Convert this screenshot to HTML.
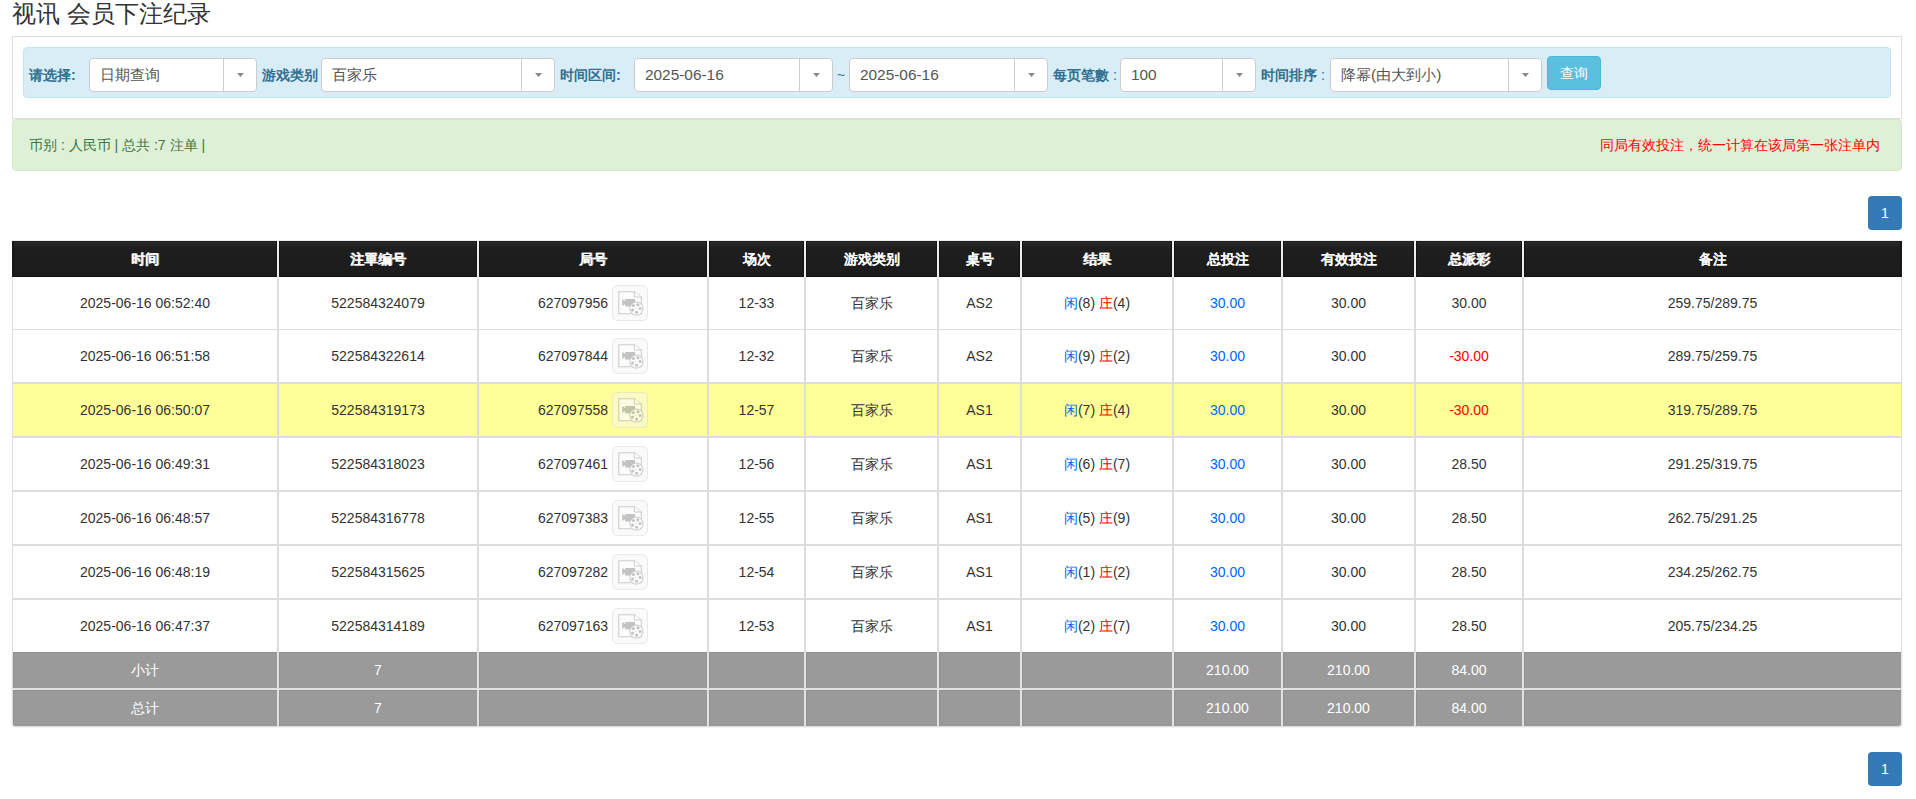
<!DOCTYPE html><html><head><meta charset="utf-8"><title>视讯 会员下注纪录</title><style>
*{margin:0;padding:0;box-sizing:border-box}
html,body{width:1916px;height:799px;overflow:hidden;background:#fff}
body{position:relative;font-family:"Liberation Sans", sans-serif;color:#333;font-size:13.2px}
.a{position:absolute}
.t{position:absolute;white-space:nowrap;line-height:1}
.sel{position:absolute;top:58px;height:34px;background:#fff;border:1px solid #ccc;border-radius:4px}
.sel .dv{position:absolute;top:0;bottom:0;width:1px;background:#ccc}
.sel .ar2{position:absolute;top:14px}
.sel .ar{position:absolute;top:14px;width:0;height:0;border-left:4px solid transparent;border-right:4px solid transparent;border-top:4px solid #888}
.sel .tx{position:absolute;left:10px;top:0;line-height:32px;font-size:15.4px;color:#555;white-space:nowrap}
.lb{position:absolute;top:58px;line-height:34px;font-weight:bold;color:#31708f;font-size:14.3px;white-space:nowrap}
.th{position:absolute;top:241px;height:36px;background:linear-gradient(to bottom,#1a1a1a 0,#1a1a1a 1px,#2a2a2a 1px,#1e1e1e 7px,#1c1c1c 100%);color:#fff;font-weight:bold;font-size:14.3px;line-height:36px;text-shadow:0.5px 0 0 rgba(255,255,255,.7);text-align:center;box-shadow:inset 1px 0 0 #141414, inset -1px 0 0 #141414, inset 0 -1px 0 #101010}
.td{position:absolute;background:#fff;text-align:center;font-size:14px;color:#333;white-space:nowrap}
.td.y{background:#ffff99}
.td.g{background:#9a9a9a;color:#fff;box-shadow:inset 0 1px 0 #919191, inset 1px 0 0 #919191}
.blue{color:#0066ff}
.red{color:#f00}
.ic{display:block;width:36px;height:36px;margin-left:4px}
.fx{display:flex;justify-content:center;align-items:center}
.pg{position:absolute;left:1868px;width:34px;height:34px;background:#337ab7;border-radius:4px;color:#fff;font-size:14px;line-height:34px;text-align:center}
</style></head><body>
<div class="t" style="left:12px;top:0px;font-size:24.2px;line-height:28px;color:#333;font-weight:300">视讯 会员下注纪录</div>
<div class="a" style="left:12px;top:36px;width:1890px;height:83px;border:1px solid #ddd"></div>
<div class="a" style="left:23px;top:47px;width:1868px;height:51px;background:#d9edf7;border:1px solid #bce8f1;border-radius:4px"></div>
<div class="lb" style="left:29px">请选择:</div>
<div class="sel" style="left:89px;width:168px"><div class="tx">日期查询</div><div class="dv" style="left:133px"></div><svg class="ar2" width="7" height="4" style="left:147px"><path d="M0 0H7L3.5 4Z" fill="#888"/></svg></div>
<div class="lb" style="left:262px">游戏类别</div>
<div class="sel" style="left:321px;width:234px"><div class="tx">百家乐</div><div class="dv" style="left:199px"></div><svg class="ar2" width="7" height="4" style="left:213px"><path d="M0 0H7L3.5 4Z" fill="#888"/></svg></div>
<div class="lb" style="left:560px">时间区间:</div>
<div class="sel" style="left:634px;width:199px"><div class="tx">2025-06-16</div><div class="dv" style="left:164px"></div><svg class="ar2" width="7" height="4" style="left:178px"><path d="M0 0H7L3.5 4Z" fill="#888"/></svg></div>
<div class="t" style="left:837px;top:68px;font-size:14px;color:#31708f">~</div>
<div class="sel" style="left:849px;width:199px"><div class="tx">2025-06-16</div><div class="dv" style="left:164px"></div><svg class="ar2" width="7" height="4" style="left:178px"><path d="M0 0H7L3.5 4Z" fill="#888"/></svg></div>
<div class="lb" style="left:1053px">每页笔數<span style="font-weight:normal"> :</span></div>
<div class="sel" style="left:1120px;width:136px"><div class="tx">100</div><div class="dv" style="left:101px"></div><svg class="ar2" width="7" height="4" style="left:115px"><path d="M0 0H7L3.5 4Z" fill="#888"/></svg></div>
<div class="lb" style="left:1261px">时间排序<span style="font-weight:normal"> :</span></div>
<div class="sel" style="left:1330px;width:212px"><div class="tx">降幂(由大到小)</div><div class="dv" style="left:177px"></div><svg class="ar2" width="7" height="4" style="left:191px"><path d="M0 0H7L3.5 4Z" fill="#888"/></svg></div>
<div class="a" style="left:1547px;top:56px;width:54px;height:34px;background:#5bc0de;border:1px solid #46b8da;border-radius:4px;color:#fff;font-size:14.3px;line-height:32px;text-align:center">查询</div>
<div class="a" style="left:12px;top:119px;width:1890px;height:52px;background:#dff0d8;border:1px solid #d6e9c6;border-radius:4px"></div>
<div class="t" style="left:29px;top:138px;color:#3c763d;font-size:14px;line-height:15px">币别 : 人民币 | 总共 :7 注单 |</div>
<div class="t" style="right:36px;top:138px;color:#f00;font-size:14px;line-height:15px">同局有效投注，统一计算在该局第一张注单内</div>
<div class="pg" style="top:196px">1</div>
<div class="pg" style="top:752px">1</div>
<div class="a" style="left:12px;top:240px;width:1890px;height:37px;background:#eeeeee"></div>
<div class="th" style="left:13px;width:264px">时间</div>
<div class="th" style="left:279px;width:198px">注單编号</div>
<div class="th" style="left:479px;width:228px">局号</div>
<div class="th" style="left:709px;width:95px">场次</div>
<div class="th" style="left:806px;width:131px">游戏类别</div>
<div class="th" style="left:939px;width:81px">桌号</div>
<div class="th" style="left:1022px;width:150px">结果</div>
<div class="th" style="left:1174px;width:107px">总投注</div>
<div class="th" style="left:1283px;width:131px">有效投注</div>
<div class="th" style="left:1416px;width:106px">总派彩</div>
<div class="th" style="left:1524px;width:377px">备注</div>
<div class="a" style="left:12px;top:241px;width:1px;height:36px;background:#1c1c1c"></div>
<div class="a" style="left:1901px;top:241px;width:1px;height:36px;background:#1c1c1c"></div>
<div class="a" style="left:12px;top:277px;width:1890px;height:375px;background:#ddd"></div>
<div class="td" style="left:13px;top:277px;width:264px;height:52px;line-height:52px">2025-06-16 06:52:40</div>
<div class="td" style="left:279px;top:277px;width:198px;height:52px;line-height:52px">522584324079</div>
<div class="td fx" style="left:479px;top:277px;width:228px;height:52px;line-height:52px">627097956<svg class="ic" width="36" height="36" viewBox="0 0 36 36"><rect x="0.5" y="0.5" width="35" height="35" rx="5" fill="rgba(244,244,244,0.45)" stroke="rgba(205,205,205,0.4)"/><g opacity="0.5"><path d="M6.8 6.7H22.3L29.3 12V28.8H6.8Z" fill="#fff" stroke="#a1a1a1" stroke-width="1.1"/><path d="M22.3 6.7V12H29.3" fill="#fff" stroke="#a1a1a1"/><path d="M10.2 14L13.2 16V14H23V21.4H13.2V19L10.2 21Z" fill="#8d8d8d"/><circle cx="24.4" cy="23.6" r="6.6" fill="#fff" stroke="#999" stroke-width="1"/><circle cx="21.4" cy="20.5" r="1.55" fill="#8d8d8d"/><circle cx="25.9" cy="19.8" r="1.55" fill="#8d8d8d"/><circle cx="28.1" cy="23.5" r="1.55" fill="#8d8d8d"/><circle cx="24.6" cy="27.3" r="1.55" fill="#8d8d8d"/><circle cx="20.6" cy="25.1" r="1.55" fill="#8d8d8d"/><circle cx="23.7" cy="23.4" r="0.5" fill="#8d8d8d"/></g></svg></div>
<div class="td" style="left:709px;top:277px;width:95px;height:52px;line-height:52px">12-33</div>
<div class="td" style="left:806px;top:277px;width:131px;height:52px;line-height:52px">百家乐</div>
<div class="td" style="left:939px;top:277px;width:81px;height:52px;line-height:52px">AS2</div>
<div class="td" style="left:1022px;top:277px;width:150px;height:52px;line-height:52px"><span class="blue">闲</span>(8) <span class="red">庄</span>(4)</div>
<div class="td" style="left:1174px;top:277px;width:107px;height:52px;line-height:52px"><span class="blue">30.00</span></div>
<div class="td" style="left:1283px;top:277px;width:131px;height:52px;line-height:52px">30.00</div>
<div class="td" style="left:1416px;top:277px;width:106px;height:52px;line-height:52px">30.00</div>
<div class="td" style="left:1524px;top:277px;width:377px;height:52px;line-height:52px">259.75/289.75</div>
<div class="td" style="left:13px;top:330px;width:264px;height:52px;line-height:52px">2025-06-16 06:51:58</div>
<div class="td" style="left:279px;top:330px;width:198px;height:52px;line-height:52px">522584322614</div>
<div class="td fx" style="left:479px;top:330px;width:228px;height:52px;line-height:52px">627097844<svg class="ic" width="36" height="36" viewBox="0 0 36 36"><rect x="0.5" y="0.5" width="35" height="35" rx="5" fill="rgba(244,244,244,0.45)" stroke="rgba(205,205,205,0.4)"/><g opacity="0.5"><path d="M6.8 6.7H22.3L29.3 12V28.8H6.8Z" fill="#fff" stroke="#a1a1a1" stroke-width="1.1"/><path d="M22.3 6.7V12H29.3" fill="#fff" stroke="#a1a1a1"/><path d="M10.2 14L13.2 16V14H23V21.4H13.2V19L10.2 21Z" fill="#8d8d8d"/><circle cx="24.4" cy="23.6" r="6.6" fill="#fff" stroke="#999" stroke-width="1"/><circle cx="21.4" cy="20.5" r="1.55" fill="#8d8d8d"/><circle cx="25.9" cy="19.8" r="1.55" fill="#8d8d8d"/><circle cx="28.1" cy="23.5" r="1.55" fill="#8d8d8d"/><circle cx="24.6" cy="27.3" r="1.55" fill="#8d8d8d"/><circle cx="20.6" cy="25.1" r="1.55" fill="#8d8d8d"/><circle cx="23.7" cy="23.4" r="0.5" fill="#8d8d8d"/></g></svg></div>
<div class="td" style="left:709px;top:330px;width:95px;height:52px;line-height:52px">12-32</div>
<div class="td" style="left:806px;top:330px;width:131px;height:52px;line-height:52px">百家乐</div>
<div class="td" style="left:939px;top:330px;width:81px;height:52px;line-height:52px">AS2</div>
<div class="td" style="left:1022px;top:330px;width:150px;height:52px;line-height:52px"><span class="blue">闲</span>(9) <span class="red">庄</span>(2)</div>
<div class="td" style="left:1174px;top:330px;width:107px;height:52px;line-height:52px"><span class="blue">30.00</span></div>
<div class="td" style="left:1283px;top:330px;width:131px;height:52px;line-height:52px">30.00</div>
<div class="td" style="left:1416px;top:330px;width:106px;height:52px;line-height:52px"><span class="red">-30.00</span></div>
<div class="td" style="left:1524px;top:330px;width:377px;height:52px;line-height:52px">289.75/259.75</div>
<div class="td y" style="left:13px;top:384px;width:264px;height:52px;line-height:52px">2025-06-16 06:50:07</div>
<div class="td y" style="left:279px;top:384px;width:198px;height:52px;line-height:52px">522584319173</div>
<div class="td y fx" style="left:479px;top:384px;width:228px;height:52px;line-height:52px">627097558<svg class="ic" width="36" height="36" viewBox="0 0 36 36"><rect x="0.5" y="0.5" width="35" height="35" rx="5" fill="rgba(244,244,244,0.45)" stroke="rgba(205,205,205,0.4)"/><g opacity="0.5"><path d="M6.8 6.7H22.3L29.3 12V28.8H6.8Z" fill="#fff" stroke="#a1a1a1" stroke-width="1.1"/><path d="M22.3 6.7V12H29.3" fill="#fff" stroke="#a1a1a1"/><path d="M10.2 14L13.2 16V14H23V21.4H13.2V19L10.2 21Z" fill="#8d8d8d"/><circle cx="24.4" cy="23.6" r="6.6" fill="#fff" stroke="#999" stroke-width="1"/><circle cx="21.4" cy="20.5" r="1.55" fill="#8d8d8d"/><circle cx="25.9" cy="19.8" r="1.55" fill="#8d8d8d"/><circle cx="28.1" cy="23.5" r="1.55" fill="#8d8d8d"/><circle cx="24.6" cy="27.3" r="1.55" fill="#8d8d8d"/><circle cx="20.6" cy="25.1" r="1.55" fill="#8d8d8d"/><circle cx="23.7" cy="23.4" r="0.5" fill="#8d8d8d"/></g></svg></div>
<div class="td y" style="left:709px;top:384px;width:95px;height:52px;line-height:52px">12-57</div>
<div class="td y" style="left:806px;top:384px;width:131px;height:52px;line-height:52px">百家乐</div>
<div class="td y" style="left:939px;top:384px;width:81px;height:52px;line-height:52px">AS1</div>
<div class="td y" style="left:1022px;top:384px;width:150px;height:52px;line-height:52px"><span class="blue">闲</span>(7) <span class="red">庄</span>(4)</div>
<div class="td y" style="left:1174px;top:384px;width:107px;height:52px;line-height:52px"><span class="blue">30.00</span></div>
<div class="td y" style="left:1283px;top:384px;width:131px;height:52px;line-height:52px">30.00</div>
<div class="td y" style="left:1416px;top:384px;width:106px;height:52px;line-height:52px"><span class="red">-30.00</span></div>
<div class="td y" style="left:1524px;top:384px;width:377px;height:52px;line-height:52px">319.75/289.75</div>
<div class="td" style="left:13px;top:438px;width:264px;height:52px;line-height:52px">2025-06-16 06:49:31</div>
<div class="td" style="left:279px;top:438px;width:198px;height:52px;line-height:52px">522584318023</div>
<div class="td fx" style="left:479px;top:438px;width:228px;height:52px;line-height:52px">627097461<svg class="ic" width="36" height="36" viewBox="0 0 36 36"><rect x="0.5" y="0.5" width="35" height="35" rx="5" fill="rgba(244,244,244,0.45)" stroke="rgba(205,205,205,0.4)"/><g opacity="0.5"><path d="M6.8 6.7H22.3L29.3 12V28.8H6.8Z" fill="#fff" stroke="#a1a1a1" stroke-width="1.1"/><path d="M22.3 6.7V12H29.3" fill="#fff" stroke="#a1a1a1"/><path d="M10.2 14L13.2 16V14H23V21.4H13.2V19L10.2 21Z" fill="#8d8d8d"/><circle cx="24.4" cy="23.6" r="6.6" fill="#fff" stroke="#999" stroke-width="1"/><circle cx="21.4" cy="20.5" r="1.55" fill="#8d8d8d"/><circle cx="25.9" cy="19.8" r="1.55" fill="#8d8d8d"/><circle cx="28.1" cy="23.5" r="1.55" fill="#8d8d8d"/><circle cx="24.6" cy="27.3" r="1.55" fill="#8d8d8d"/><circle cx="20.6" cy="25.1" r="1.55" fill="#8d8d8d"/><circle cx="23.7" cy="23.4" r="0.5" fill="#8d8d8d"/></g></svg></div>
<div class="td" style="left:709px;top:438px;width:95px;height:52px;line-height:52px">12-56</div>
<div class="td" style="left:806px;top:438px;width:131px;height:52px;line-height:52px">百家乐</div>
<div class="td" style="left:939px;top:438px;width:81px;height:52px;line-height:52px">AS1</div>
<div class="td" style="left:1022px;top:438px;width:150px;height:52px;line-height:52px"><span class="blue">闲</span>(6) <span class="red">庄</span>(7)</div>
<div class="td" style="left:1174px;top:438px;width:107px;height:52px;line-height:52px"><span class="blue">30.00</span></div>
<div class="td" style="left:1283px;top:438px;width:131px;height:52px;line-height:52px">30.00</div>
<div class="td" style="left:1416px;top:438px;width:106px;height:52px;line-height:52px">28.50</div>
<div class="td" style="left:1524px;top:438px;width:377px;height:52px;line-height:52px">291.25/319.75</div>
<div class="td" style="left:13px;top:492px;width:264px;height:52px;line-height:52px">2025-06-16 06:48:57</div>
<div class="td" style="left:279px;top:492px;width:198px;height:52px;line-height:52px">522584316778</div>
<div class="td fx" style="left:479px;top:492px;width:228px;height:52px;line-height:52px">627097383<svg class="ic" width="36" height="36" viewBox="0 0 36 36"><rect x="0.5" y="0.5" width="35" height="35" rx="5" fill="rgba(244,244,244,0.45)" stroke="rgba(205,205,205,0.4)"/><g opacity="0.5"><path d="M6.8 6.7H22.3L29.3 12V28.8H6.8Z" fill="#fff" stroke="#a1a1a1" stroke-width="1.1"/><path d="M22.3 6.7V12H29.3" fill="#fff" stroke="#a1a1a1"/><path d="M10.2 14L13.2 16V14H23V21.4H13.2V19L10.2 21Z" fill="#8d8d8d"/><circle cx="24.4" cy="23.6" r="6.6" fill="#fff" stroke="#999" stroke-width="1"/><circle cx="21.4" cy="20.5" r="1.55" fill="#8d8d8d"/><circle cx="25.9" cy="19.8" r="1.55" fill="#8d8d8d"/><circle cx="28.1" cy="23.5" r="1.55" fill="#8d8d8d"/><circle cx="24.6" cy="27.3" r="1.55" fill="#8d8d8d"/><circle cx="20.6" cy="25.1" r="1.55" fill="#8d8d8d"/><circle cx="23.7" cy="23.4" r="0.5" fill="#8d8d8d"/></g></svg></div>
<div class="td" style="left:709px;top:492px;width:95px;height:52px;line-height:52px">12-55</div>
<div class="td" style="left:806px;top:492px;width:131px;height:52px;line-height:52px">百家乐</div>
<div class="td" style="left:939px;top:492px;width:81px;height:52px;line-height:52px">AS1</div>
<div class="td" style="left:1022px;top:492px;width:150px;height:52px;line-height:52px"><span class="blue">闲</span>(5) <span class="red">庄</span>(9)</div>
<div class="td" style="left:1174px;top:492px;width:107px;height:52px;line-height:52px"><span class="blue">30.00</span></div>
<div class="td" style="left:1283px;top:492px;width:131px;height:52px;line-height:52px">30.00</div>
<div class="td" style="left:1416px;top:492px;width:106px;height:52px;line-height:52px">28.50</div>
<div class="td" style="left:1524px;top:492px;width:377px;height:52px;line-height:52px">262.75/291.25</div>
<div class="td" style="left:13px;top:546px;width:264px;height:52px;line-height:52px">2025-06-16 06:48:19</div>
<div class="td" style="left:279px;top:546px;width:198px;height:52px;line-height:52px">522584315625</div>
<div class="td fx" style="left:479px;top:546px;width:228px;height:52px;line-height:52px">627097282<svg class="ic" width="36" height="36" viewBox="0 0 36 36"><rect x="0.5" y="0.5" width="35" height="35" rx="5" fill="rgba(244,244,244,0.45)" stroke="rgba(205,205,205,0.4)"/><g opacity="0.5"><path d="M6.8 6.7H22.3L29.3 12V28.8H6.8Z" fill="#fff" stroke="#a1a1a1" stroke-width="1.1"/><path d="M22.3 6.7V12H29.3" fill="#fff" stroke="#a1a1a1"/><path d="M10.2 14L13.2 16V14H23V21.4H13.2V19L10.2 21Z" fill="#8d8d8d"/><circle cx="24.4" cy="23.6" r="6.6" fill="#fff" stroke="#999" stroke-width="1"/><circle cx="21.4" cy="20.5" r="1.55" fill="#8d8d8d"/><circle cx="25.9" cy="19.8" r="1.55" fill="#8d8d8d"/><circle cx="28.1" cy="23.5" r="1.55" fill="#8d8d8d"/><circle cx="24.6" cy="27.3" r="1.55" fill="#8d8d8d"/><circle cx="20.6" cy="25.1" r="1.55" fill="#8d8d8d"/><circle cx="23.7" cy="23.4" r="0.5" fill="#8d8d8d"/></g></svg></div>
<div class="td" style="left:709px;top:546px;width:95px;height:52px;line-height:52px">12-54</div>
<div class="td" style="left:806px;top:546px;width:131px;height:52px;line-height:52px">百家乐</div>
<div class="td" style="left:939px;top:546px;width:81px;height:52px;line-height:52px">AS1</div>
<div class="td" style="left:1022px;top:546px;width:150px;height:52px;line-height:52px"><span class="blue">闲</span>(1) <span class="red">庄</span>(2)</div>
<div class="td" style="left:1174px;top:546px;width:107px;height:52px;line-height:52px"><span class="blue">30.00</span></div>
<div class="td" style="left:1283px;top:546px;width:131px;height:52px;line-height:52px">30.00</div>
<div class="td" style="left:1416px;top:546px;width:106px;height:52px;line-height:52px">28.50</div>
<div class="td" style="left:1524px;top:546px;width:377px;height:52px;line-height:52px">234.25/262.75</div>
<div class="td" style="left:13px;top:600px;width:264px;height:52px;line-height:52px">2025-06-16 06:47:37</div>
<div class="td" style="left:279px;top:600px;width:198px;height:52px;line-height:52px">522584314189</div>
<div class="td fx" style="left:479px;top:600px;width:228px;height:52px;line-height:52px">627097163<svg class="ic" width="36" height="36" viewBox="0 0 36 36"><rect x="0.5" y="0.5" width="35" height="35" rx="5" fill="rgba(244,244,244,0.45)" stroke="rgba(205,205,205,0.4)"/><g opacity="0.5"><path d="M6.8 6.7H22.3L29.3 12V28.8H6.8Z" fill="#fff" stroke="#a1a1a1" stroke-width="1.1"/><path d="M22.3 6.7V12H29.3" fill="#fff" stroke="#a1a1a1"/><path d="M10.2 14L13.2 16V14H23V21.4H13.2V19L10.2 21Z" fill="#8d8d8d"/><circle cx="24.4" cy="23.6" r="6.6" fill="#fff" stroke="#999" stroke-width="1"/><circle cx="21.4" cy="20.5" r="1.55" fill="#8d8d8d"/><circle cx="25.9" cy="19.8" r="1.55" fill="#8d8d8d"/><circle cx="28.1" cy="23.5" r="1.55" fill="#8d8d8d"/><circle cx="24.6" cy="27.3" r="1.55" fill="#8d8d8d"/><circle cx="20.6" cy="25.1" r="1.55" fill="#8d8d8d"/><circle cx="23.7" cy="23.4" r="0.5" fill="#8d8d8d"/></g></svg></div>
<div class="td" style="left:709px;top:600px;width:95px;height:52px;line-height:52px">12-53</div>
<div class="td" style="left:806px;top:600px;width:131px;height:52px;line-height:52px">百家乐</div>
<div class="td" style="left:939px;top:600px;width:81px;height:52px;line-height:52px">AS1</div>
<div class="td" style="left:1022px;top:600px;width:150px;height:52px;line-height:52px"><span class="blue">闲</span>(2) <span class="red">庄</span>(7)</div>
<div class="td" style="left:1174px;top:600px;width:107px;height:52px;line-height:52px"><span class="blue">30.00</span></div>
<div class="td" style="left:1283px;top:600px;width:131px;height:52px;line-height:52px">30.00</div>
<div class="td" style="left:1416px;top:600px;width:106px;height:52px;line-height:52px">28.50</div>
<div class="td" style="left:1524px;top:600px;width:377px;height:52px;line-height:52px">205.75/234.25</div>
<div class="a" style="left:12px;top:652px;width:1890px;height:74px;background:#e2e2e2;border-radius:0 0 3px 3px;box-shadow:0 1px 2px rgba(0,0,0,.18)"></div>
<div class="td g" style="left:13px;top:652px;width:264px;height:36px;line-height:36px;">小计</div>
<div class="td g" style="left:279px;top:652px;width:198px;height:36px;line-height:36px;">7</div>
<div class="td g" style="left:479px;top:652px;width:228px;height:36px;line-height:36px;"></div>
<div class="td g" style="left:709px;top:652px;width:95px;height:36px;line-height:36px;"></div>
<div class="td g" style="left:806px;top:652px;width:131px;height:36px;line-height:36px;"></div>
<div class="td g" style="left:939px;top:652px;width:81px;height:36px;line-height:36px;"></div>
<div class="td g" style="left:1022px;top:652px;width:150px;height:36px;line-height:36px;"></div>
<div class="td g" style="left:1174px;top:652px;width:107px;height:36px;line-height:36px;">210.00</div>
<div class="td g" style="left:1283px;top:652px;width:131px;height:36px;line-height:36px;">210.00</div>
<div class="td g" style="left:1416px;top:652px;width:106px;height:36px;line-height:36px;">84.00</div>
<div class="td g" style="left:1524px;top:652px;width:377px;height:36px;line-height:36px;"></div>
<div class="td g" style="left:13px;top:690px;width:264px;height:36px;line-height:36px;border-bottom-left-radius:3px;">总计</div>
<div class="td g" style="left:279px;top:690px;width:198px;height:36px;line-height:36px;">7</div>
<div class="td g" style="left:479px;top:690px;width:228px;height:36px;line-height:36px;"></div>
<div class="td g" style="left:709px;top:690px;width:95px;height:36px;line-height:36px;"></div>
<div class="td g" style="left:806px;top:690px;width:131px;height:36px;line-height:36px;"></div>
<div class="td g" style="left:939px;top:690px;width:81px;height:36px;line-height:36px;"></div>
<div class="td g" style="left:1022px;top:690px;width:150px;height:36px;line-height:36px;"></div>
<div class="td g" style="left:1174px;top:690px;width:107px;height:36px;line-height:36px;">210.00</div>
<div class="td g" style="left:1283px;top:690px;width:131px;height:36px;line-height:36px;">210.00</div>
<div class="td g" style="left:1416px;top:690px;width:106px;height:36px;line-height:36px;">84.00</div>
<div class="td g" style="left:1524px;top:690px;width:377px;height:36px;line-height:36px;border-bottom-right-radius:3px;"></div>
</body></html>
